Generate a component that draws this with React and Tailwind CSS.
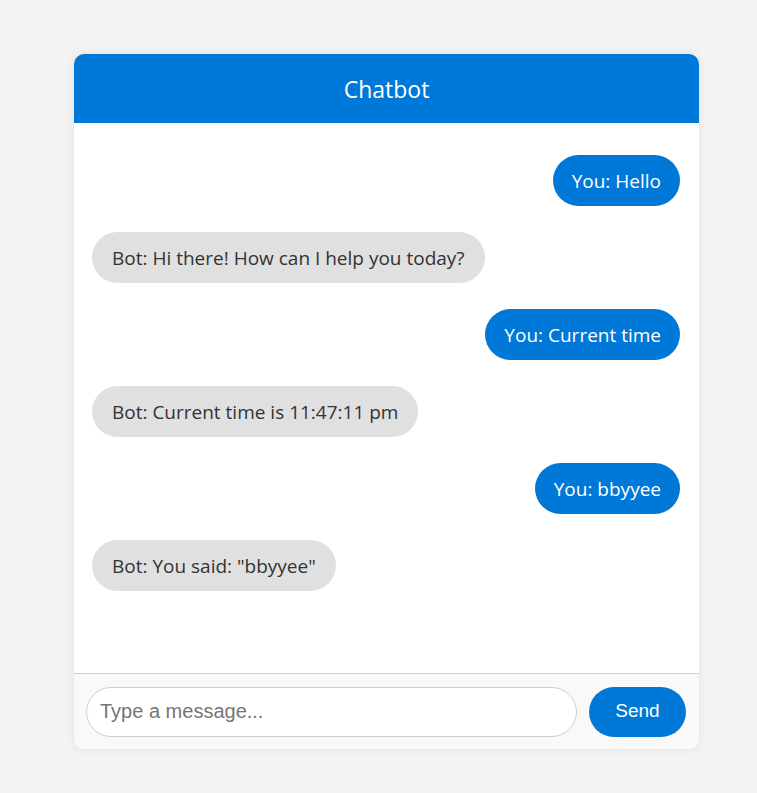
import React, { useState } from "react";

const initialMessages = [
  { from: "user", text: "You: Hello" },
  { from: "bot", text: "Bot: Hi there! How can I help you today?" },
  { from: "user", text: "You: Current time" },
  { from: "bot", text: "Bot: Current time is 11:47:11 pm" },
  { from: "user", text: "You: bbyyee" },
  { from: "bot", text: 'Bot: You said: "bbyyee"' },
];

const Message = ({ msg }) => {
  const isUser = msg.from === "user";
  return (
    <div className={isUser ? "flex justify-end" : "flex justify-start"}>
      <div
        className={
          isUser
            ? "rounded-full px-[19px] pt-[13px] pb-[11px] leading-[27px] text-[19px] bg-[#0078d7] text-white"
            : "rounded-full px-[20px] pt-[13px] pb-[11px] leading-[27px] text-[19px] bg-[#e0e0e0] text-[#333]"
        }
      >
        {msg.text}
      </div>
    </div>
  );
};

const App = () => {
  const [messages] = useState(initialMessages);
  const [input, setInput] = useState("");

  return (
    <div
      className="min-h-screen bg-[#f3f3f3] flex justify-center pt-[54px] pl-[16px]"
      style={{ fontFamily: "'Open Sans', sans-serif" }}
    >
      <div className="w-[625px] h-[695px] bg-white rounded-[10px] overflow-hidden shadow-[0_0_10px_rgba(0,0,0,0.08)] flex flex-col">
        <div className="h-[69px] bg-[#0078d7] text-white text-[23px] flex items-center justify-center pt-[2px]">
          Chatbot
        </div>
        <div className="flex-1 flex flex-col gap-[26px] pt-[32px] pl-[18px] pr-[19px] pb-[20px]">
          {messages.map((m, i) => (
            <Message key={i} msg={m} />
          ))}
        </div>
        <div className="border-t border-[#ccc] bg-[#f9f9f9] pl-[12px] pr-[13px] pt-[13px] pb-[12px] flex gap-[12px]">
          <input
            value={input}
            onChange={(e) => setInput(e.target.value)}
            placeholder="Type a message..."
            className="flex-1 h-[50px] rounded-full border border-[#ccc] bg-white px-[13px] pb-[2px] text-[20px] outline-none placeholder:text-[#757575]"
            style={{ fontFamily: "'Liberation Sans', Arial, sans-serif" }}
          />
          <button
            className="w-[97px] h-[50px] rounded-full bg-[#0078d7] text-white text-[19px] pb-[2px]"
            style={{ fontFamily: "'Liberation Sans', Arial, sans-serif" }}
          >
            Send
          </button>
        </div>
      </div>
    </div>
  );
};

export default App;
